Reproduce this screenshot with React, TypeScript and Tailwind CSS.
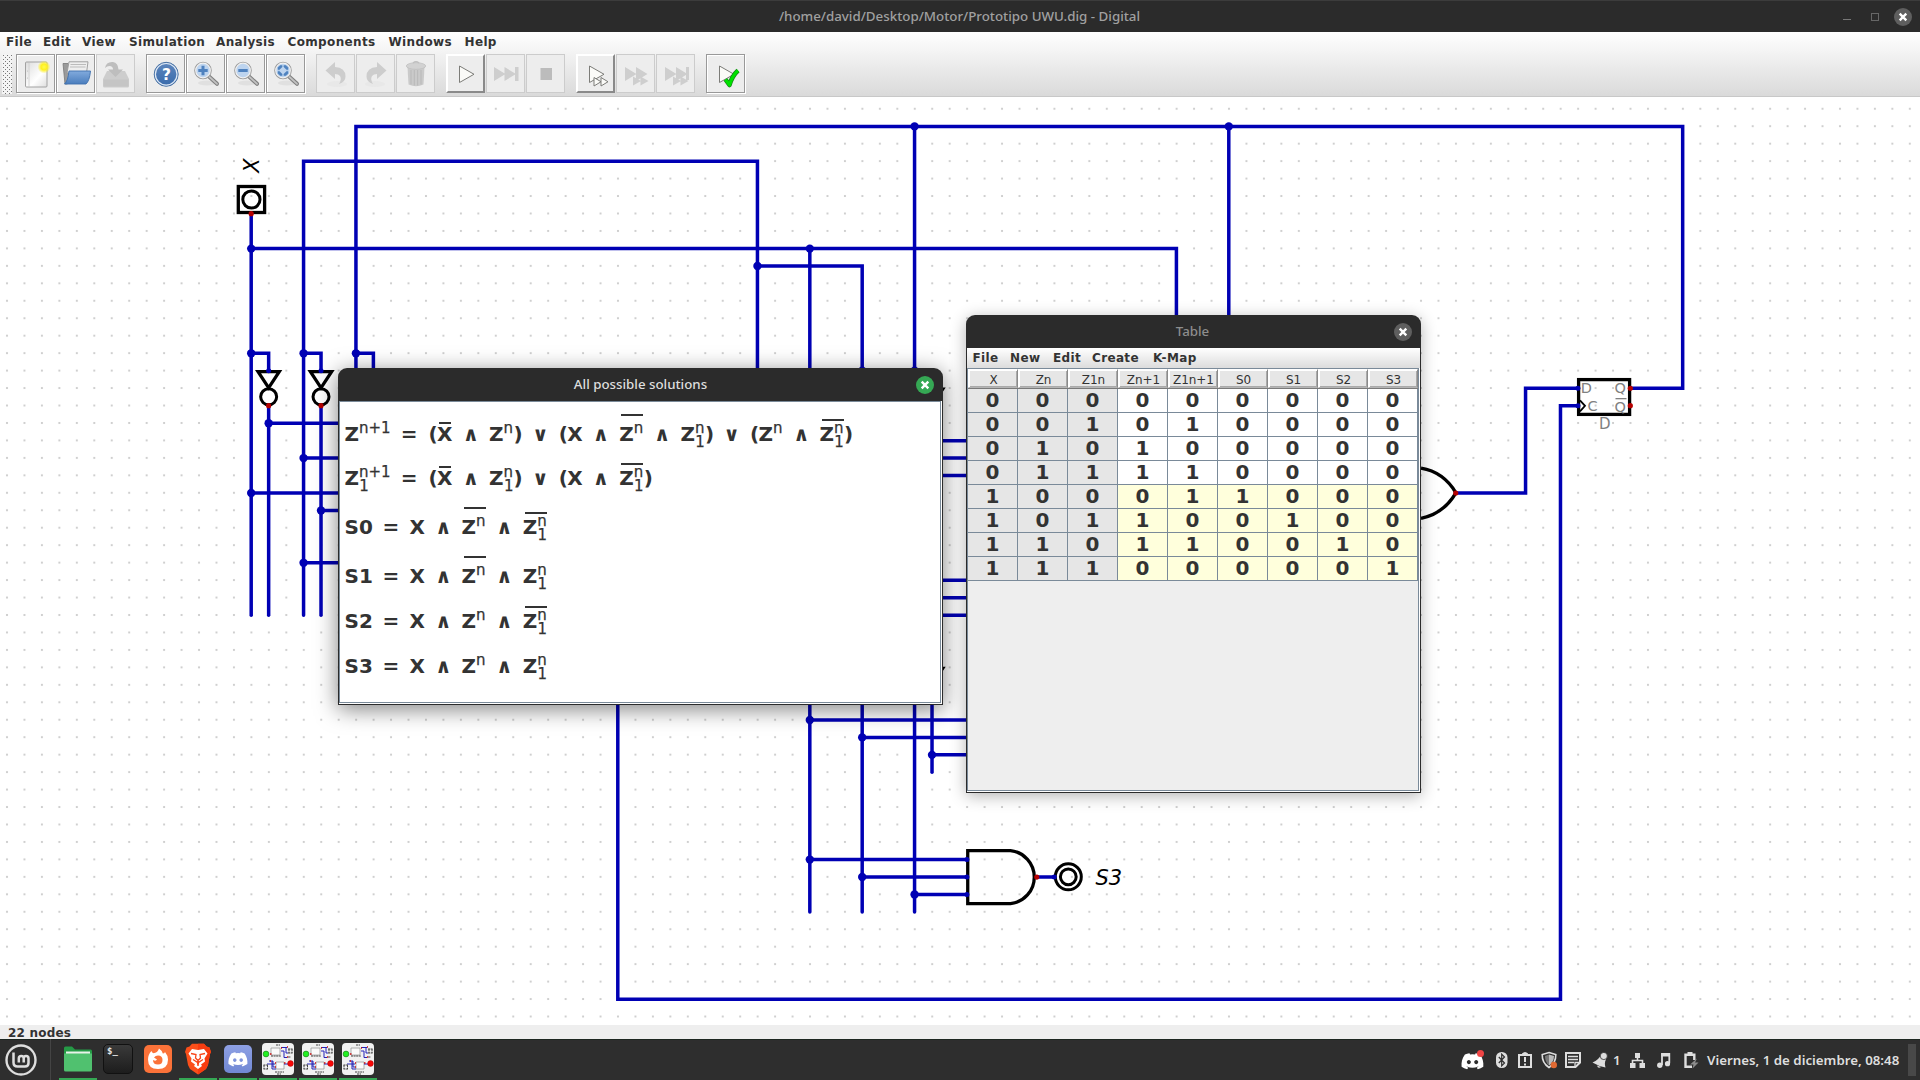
import React from "react";

const G = 17.457;
const gx = (k: number) => 6.8 + G * k;
const gy = (j: number) => 126.4 + G * j;

/* Wires as polylines on the circuit grid */
const WIRES: [number, number][][] = [
  [[14, 5], [14, 28]],
  [[14, 7], [67, 7], [67, 18]],
  [[14, 13], [15, 13], [15, 14]],
  [[15, 16], [15, 28]],
  [[15, 17], [30, 17]],
  [[17, 19], [30, 19]],
  [[14, 21], [30, 21]],
  [[18, 22], [30, 22]],
  [[17, 25], [30, 25]],
  [[17, 28], [17, 2], [43, 2], [43, 20]],
  [[17, 13], [18, 13], [18, 14]],
  [[18, 16], [18, 28]],
  [[20, 28], [20, 0], [96, 0], [96, 15], [93, 15]],
  [[20, 13], [21, 13], [21, 20]],
  [[43, 8], [49, 8], [49, 45]],
  [[46, 7], [46, 45]],
  [[52, 0], [52, 45]],
  [[70, 0], [70, 18]],
  [[49, 14], [50, 14]],
  [[52, 14], [53, 14]],
  [[53, 33], [53, 37]],
  [[50, 18], [55, 18]],
  [[50, 19], [55, 19]],
  [[50, 20], [55, 20]],
  [[50, 26], [55, 26]],
  [[50, 27], [55, 27]],
  [[50, 28], [55, 28]],
  [[46, 34], [55, 34]],
  [[49, 35], [55, 35]],
  [[53, 36], [55, 36]],
  [[46, 42], [55, 42]],
  [[49, 43], [55, 43]],
  [[52, 44], [55, 44]],
  [[59, 43], [60, 43]],
  [[35, 30], [35, 50], [89, 50], [89, 16], [90, 16]],
  [[83, 21], [87, 21], [87, 15], [90, 15]],
];

const NODES: [number, number][] = [
  [14, 7], [14, 13], [17, 13], [20, 13], [15, 17], [17, 19], [14, 21], [18, 22], [17, 25],
  [43, 8], [46, 7], [52, 0], [70, 0], [49, 14], [52, 14],
  [46, 34], [49, 35], [53, 36], [46, 42], [49, 43], [52, 44],
];

const INPUT_PINS: [number, number][] = [
  [15, 14], [18, 14], [55, 42], [55, 43], [55, 44], [60, 43], [90, 15], [90, 16],
];
const OUTPUT_PINS: [number, number][] = [
  [14, 5], [15, 16], [18, 16], [59, 43], [83, 21], [93, 15], [93, 16], [53, 33],
];

function Inverter({ k, j }: { k: number; j: number }) {
  const x = gx(k);
  const y = gy(j);
  return (
    <g fill="none" stroke="#000" strokeWidth="3.3">
      <path d={`M${x - 10.6} ${y + 0.9}H${x + 10.6}L${x} ${y + 17}Z`} />
      <circle cx={x} cy={y + 26} r="8" strokeWidth="3" />
    </g>
  );
}

function AndGate({ j }: { j: number }) {
  const x = gx(55) + 0.8;
  const y = gy(j);
  return (
    <path
      d={`M${x} ${y - 8.9}H1010.5A26.6 26.6 0 0 1 1010.5 ${y + 44}H${x}Z`}
      fill="none"
      stroke="#000"
      strokeWidth="3.3"
    />
  );
}

function Circuit() {
  return (
    <svg viewBox="0 97 1920 928" className="block h-[928px] w-full" fontFamily="DejaVu Sans, sans-serif">
      <defs>
        <pattern id="grid" x={7 - G / 2} y={126.2 - G / 2} width={G} height={G} patternUnits="userSpaceOnUse">
          <rect x={G / 2 - 1} y={G / 2 - 1} width="2" height="2" fill="#cfcfcf" />
        </pattern>
      </defs>
      <rect x="0" y="97" width="1920" height="928" fill="url(#grid)" />
      <g fill="none" stroke="#000" strokeWidth="3.3">
        <rect x="238.3" y="186.5" width="26.3" height="26" />
        <circle cx="251.4" cy="199.5" r="8.6" strokeWidth="3" />
        <rect x="1578.6" y="379.6" width="51" height="34.8" />
        <path d="M1421 468.2Q1443.5 472 1455.9 492.8Q1443.5 513.8 1421 518.4" />
        <circle cx="1068.3" cy="876.8" r="13" strokeWidth="3" />
        <circle cx="1068.3" cy="876.8" r="7.9" strokeWidth="3" />
      </g>
      <Inverter k={15} j={14} />
      <Inverter k={18} j={14} />
      <Inverter k={53} j={15} />
      <Inverter k={53} j={31} />
      <AndGate j={18} />
      <AndGate j={26} />
      <AndGate j={34} />
      <AndGate j={42} />
      <path d="M1580 400.4L1585 405.8L1580 411.4" fill="none" stroke="#000" strokeWidth="1.8" />
      <g fill="#808080" fontSize="14.5">
        <text x="1580.8" y="392.7">D</text>
        <text x="1587.4" y="411">C</text>
        <text x="1614.4" y="392.7">Q</text>
        <text x="1614.4" y="411.7">Q</text>
        <text x="1599" y="428.6" fontSize="15">D</text>
        <rect x="1615.5" y="398" width="11" height="1.3" />
      </g>
      <g fill="none" stroke="#0000b4" strokeWidth="3.5" strokeLinecap="round" strokeLinejoin="miter">
        {WIRES.map((w, i) => (
          <polyline key={i} points={w.map(([k, j]) => `${gx(k)},${gy(j)}`).join(" ")} />
        ))}
      </g>
      <g fill="#0000b4">
        {NODES.map(([k, j], i) => (
          <circle key={i} cx={gx(k)} cy={gy(j)} r="4.2" />
        ))}
        {INPUT_PINS.map(([k, j], i) => (
          <circle key={i} cx={gx(k)} cy={gy(j)} r="2.5" />
        ))}
      </g>
      <g fill="#b40000">
        {OUTPUT_PINS.map(([k, j], i) => (
          <circle key={i} cx={gx(k)} cy={gy(j)} r="2.6" />
        ))}
      </g>
      <text transform="translate(259.1 172.7) rotate(-90)" fontSize="21" fontStyle="italic" fill="#000">X</text>
      <text x="1095.5" y="885" fontSize="21" fontStyle="italic" fill="#000">S3</text>
    </svg>
  );
}

/* ---------- toolbar ---------- */

function PageIcon() {
  return (
    <svg viewBox="0 0 32 32" className="h-8 w-8">
      <defs>
        <linearGradient id="pg" x1="0" y1="0" x2="1" y2="1">
          <stop offset="0" stopColor="#dcdcdc" /><stop offset=".6" stopColor="#fff" /><stop offset="1" stopColor="#ddd" />
        </linearGradient>
        <radialGradient id="sun"><stop offset="0" stopColor="#fffa50" /><stop offset=".45" stopColor="#fff01e" /><stop offset="1" stopColor="#fff01e" stopOpacity="0" /></radialGradient>
      </defs>
      <rect x="5.5" y="4" width="21.5" height="25" rx="1" fill="url(#pg)" stroke="#9a9a9a" strokeWidth=".9" />
      <path d="M9 5V28.500" stroke="#ccc" strokeWidth=".8" />
      <circle cx="7.500" cy="13" r=".6" fill="#bbb" /><circle cx="7.500" cy="20" r=".6" fill="#bbb" />
      <circle cx="24" cy="9" r="6.5" fill="url(#sun)" />
    </svg>
  );
}

function OpenIcon() {
  return (
    <svg viewBox="0 0 32 32" className="h-8 w-8">
      <defs>
        <linearGradient id="of" x1="0" y1="0" x2="0" y2="1"><stop offset="0" stopColor="#82abdd" /><stop offset="1" stopColor="#4a7dbd" /></linearGradient>
      </defs>
      <path d="M3 5.500H8L10 7.500V24L7 26H5Z" fill="#9a9a9a" stroke="#777" strokeWidth=".8" />
      <path d="M9 3.800H28L26.500 15H7Z" fill="#eee" stroke="#999" strokeWidth=".9" />
      <path d="M10.500 6.500H26M10 9H25.500" stroke="#bbb" />
      <path d="M9 13H30.500Q29.500 23 26 26H4.500Q8 23 9 13Z" fill="url(#of)" stroke="#3f70ae" strokeWidth=".9" />
    </svg>
  );
}

function SaveIcon() {
  return (
    <svg viewBox="0 0 32 32" className="h-8 w-8">
      <path d="M7 13H25L29 21V28Q29 29.500 27.500 29.500H4.500Q3 29.500 3 28V21Z" fill="#cdcdcd" />
      <path d="M3.500 21.500H28.500V28.500H3.500Z" fill="#c5c5c5" />
      <path d="M5 10Q6 3.500 13 4Q18 4.500 18.500 11.500H23L15.500 19L8 11.500H13Q13 8 9.500 8Q7 8 5 10Z" fill="#bebebe" />
    </svg>
  );
}

function HelpIcon() {
  return (
    <svg viewBox="0 0 32 32" className="h-8 w-8">
      <defs><linearGradient id="hb" x1="0" y1="0" x2="0" y2="1"><stop offset="0" stopColor="#5d86bd" /><stop offset="1" stopColor="#386aab" /></linearGradient></defs>
      <circle cx="16.2" cy="16.3" r="12" fill="url(#hb)" stroke="#386499" strokeWidth=".8" />
      <circle cx="16.2" cy="16.3" r="10.8" fill="none" stroke="#dfe9f5" strokeWidth="1.2" />
      <text x="16.4" y="22" textAnchor="middle" fontFamily="DejaVu Sans" fontWeight="700" fontSize="15.5" fill="#fff">?</text>
    </svg>
  );
}

function ZoomIcon({ kind }: { kind: "in" | "out" | "fit" }) {
  return (
    <svg viewBox="0 0 32 32" className="h-8 w-8">
      <ellipse cx="17" cy="25" rx="9" ry="2.5" fill="#e0e0e0" />
      <path d="M19 18.500L27 25.800" stroke="#808080" strokeWidth="4" strokeLinecap="round" />
      <path d="M19 18.500L27 25.800" stroke="#c2c2c2" strokeWidth="1.8" strokeLinecap="round" />
      <circle cx="13" cy="12.5" r="8" fill="#bdd4ef" stroke="#9a9a9a" strokeWidth="1.6" />
      <circle cx="13" cy="12.5" r="7.3" fill="none" stroke="#f2f2f2" strokeWidth="1.2" />
      {kind === "in" && <path d="M13 7.800V17.200M8.300 12.500H17.700" stroke="#4f82bf" strokeWidth="3" />}
      {kind === "out" && <path d="M8.300 12.500H17.700" stroke="#4f82bf" strokeWidth="3" />}
      {kind === "fit" && (
        <path
          d="M8 11.600V9.500L10 7.500H12.100V9L9.500 11.600ZM13.900 7.500H16L18 9.500V11.600H16.500L13.900 9ZM8 13.400H9.500L12.100 16V17.500H10L8 15.500ZM18 13.400V15.500L16 17.500H13.900V16L16.500 13.400Z"
          fill="#4f82bf"
          stroke="#4f82bf"
          strokeWidth=".5"
        />
      )}
    </svg>
  );
}

function UndoIcon({ flip }: { flip?: boolean }) {
  return (
    <svg viewBox="0 0 32 32" className={flip ? "h-8 w-8 -scale-x-100" : "h-8 w-8"}>
      <ellipse cx="17" cy="26" rx="10" ry="3" fill="#e8e8e8" />
      <path d="M5.500 12.500L15 4V9Q25.500 9.500 25.500 18.500Q25.500 24 19 26Q22 21 20 18Q18.500 16 15 16V21Z" fill="#cdcdcd" />
    </svg>
  );
}

function TrashIcon() {
  return (
    <svg viewBox="0 0 32 32" className="h-8 w-8">
      <path d="M7.500 9H24.500L23.500 26.500Q16 30 8.500 26.500Z" fill="#cacaca" />
      <path d="M11 12V26.500M14.300 12V27.500M17.700 12V27.500M21 12V26.500" stroke="#b8b8b8" />
      <ellipse cx="16" cy="8" rx="9.700" ry="3.300" fill="#d2d2d2" stroke="#c0c0c0" strokeWidth=".8" />
      <path d="M13 5Q16 2.500 19 5" fill="none" stroke="#c0c0c0" strokeWidth="1.5" />
    </svg>
  );
}

const tri = (x: number, y: number, w: number, h: number) => `M${x} ${y}L${x + w} ${y + h / 2}L${x} ${y + h}Z`;

function PlayIcon({ kind }: { kind: "play" | "step" | "stop" | "micro" | "ff" | "ffend" | "check" }) {
  const outline = { fill: "#fbfbf8", stroke: "#7c7c78", strokeWidth: 1 };
  return (
    <svg viewBox="0 0 32 32" className="h-8 w-8">
      {(kind === "play" || kind === "micro" || kind === "check") && <path d={tri(9.5, 8, 14.5, 16.5)} {...outline} />}
      {kind === "micro" && <path d={tri(14, 19.500, 7, 8.500) + tri(21, 19.500, 7, 8.500)} {...outline} />}
      {kind === "check" && (
        <path d="M15.500 21.500L19.500 27Q22 18 28 12.500" fill="none" stroke="#1c7a1c" strokeWidth="4.6" strokeLinejoin="round" />
      )}
      {kind === "check" && (
        <path d="M15.500 21.500L19.500 27Q22 18 28 12.500" fill="none" stroke="#00e100" strokeWidth="3.2" strokeLinejoin="round" />
      )}
      {kind === "step" && (
        <g fill="#cecece"><path d={tri(4, 9, 11.5, 14) + tri(14.5, 9, 11.5, 14)} /><rect x="25" y="9" width="3.5" height="14" /></g>
      )}
      {kind === "stop" && <rect x="10.500" y="10" width="11.500" height="12" fill="#bcbcbc" />}
      {(kind === "ff" || kind === "ffend") && (
        <g fill="#cecece">
          <path d={tri(5, 9, 11.5, 14) + tri(16, 9, 11.5, 14) + tri(13, 18.5, 8, 9) + tri(20.5, 18.5, 8, 9)} />
          {kind === "ffend" && <rect x="26" y="9" width="3" height="13" />}
        </g>
      )}
    </svg>
  );
}

type Tone = "on" | "off" | "raised";

function Tool({ tone, children }: { tone: Tone; children: React.ReactNode }) {
  const look =
    tone === "on"
      ? "border border-[#999] shadow-[1px_1px_0_#fff,inset_1px_1px_0_#fff]"
      : tone === "off"
        ? "border border-[#cccccc]"
        : "border-2 border-t-white border-l-white border-r-[#8a8a8a] border-b-[#8a8a8a]";
  return <div className={`flex h-[39px] w-[39px] items-center justify-center bg-[#ededed] ${look}`}>{children}</div>;
}

function Toolbar() {
  return (
    <div className="flex h-[41px] items-start gap-[10px] pl-[2px]">
      <svg className="mr-[-6px] h-10 w-[10px] shrink-0">
        <defs>
          <pattern id="grip" width="4" height="4" patternUnits="userSpaceOnUse">
            <rect width="4" height="4" fill="#f4f4f4" /><rect x="1" y="1" width="1" height="1" fill="#777" /><rect x="3" y="3" width="1" height="1" fill="#777" />
          </pattern>
        </defs>
        <rect width="10" height="40" fill="url(#grip)" />
      </svg>
      <div className="flex gap-px">
        <Tool tone="on"><PageIcon /></Tool>
        <Tool tone="on"><OpenIcon /></Tool>
        <Tool tone="off"><SaveIcon /></Tool>
      </div>
      <div className="ml-px flex gap-px">
        <Tool tone="on"><HelpIcon /></Tool>
        <Tool tone="on"><ZoomIcon kind="in" /></Tool>
        <Tool tone="on"><ZoomIcon kind="out" /></Tool>
        <Tool tone="on"><ZoomIcon kind="fit" /></Tool>
      </div>
      <div className="ml-px flex gap-px">
        <Tool tone="off"><UndoIcon /></Tool>
        <Tool tone="off"><UndoIcon flip /></Tool>
        <Tool tone="off"><TrashIcon /></Tool>
      </div>
      <div className="ml-px flex gap-px">
        <Tool tone="raised"><PlayIcon kind="play" /></Tool>
        <Tool tone="off"><PlayIcon kind="step" /></Tool>
        <Tool tone="off"><PlayIcon kind="stop" /></Tool>
      </div>
      <div className="ml-px flex gap-px">
        <Tool tone="raised"><PlayIcon kind="micro" /></Tool>
        <Tool tone="off"><PlayIcon kind="ff" /></Tool>
        <Tool tone="off"><PlayIcon kind="ffend" /></Tool>
      </div>
      <div className="ml-px flex">
        <Tool tone="on"><PlayIcon kind="check" /></Tool>
      </div>
    </div>
  );
}

/* ---------- windows ---------- */

function CloseButton({ green }: { green?: boolean }) {
  return (
    <span className={`flex h-[18px] w-[18px] items-center justify-center rounded-full ${green ? "bg-[#35a854]" : "bg-[#5f5f5f]"}`}>
      <svg viewBox="0 0 10 10" className="h-[10px] w-[10px]">
        <path d="M1.700 1.700L8.300 8.300M8.300 1.700L1.700 8.300" stroke="#fff" strokeWidth="2.4" />
      </svg>
    </span>
  );
}

function Formula({ children, className }: { children: React.ReactNode; className: string }) {
  return <div className={`flex h-6 items-center whitespace-nowrap ${className}`}>{children}</div>;
}
const Op = ({ children }: { children: string }) => <span className="w-[36.6px] text-center">{children}</span>;
const Eq = ({ w }: { w: string }) => <span className={`text-center ${w}`}>=</span>;
const P = ({ children }: { children: string }) => <span className="w-[8.5px]">{children}</span>;
const X = ({ bar }: { bar?: boolean }) => (
  <span className="relative w-[15.5px]">
    X{bar && <i className="absolute top-0 left-[2px] h-[2px] w-[12px] bg-[#333]" />}
  </span>
);
function Z({ sup = "n", sub, bar }: { sup?: string; sub?: boolean; bar?: boolean }) {
  return (
    <span className="relative flex h-6 items-center">
      <span className="w-[14.5px]">Z</span>
      <span className={`relative h-6 text-[15px] font-normal [-webkit-text-stroke:0.25px_#333] ${sup === "n" ? "w-[10px]" : "w-[31px]"}`}>
        <span className="absolute -top-[6px] left-0 leading-6">{sup}</span>
        {sub && <span className="absolute top-[8px] left-[0.3px] leading-6">1</span>}
      </span>
      {bar && <i className={`absolute left-[2px] h-[2px] w-[22px] bg-[#333] ${sub ? "-top-[3px]" : "-top-[8px]"}`} />}
    </span>
  );
}

function SolutionsWindow() {
  return (
    <section className="absolute top-[368px] left-[338px] flex h-[337px] w-[605px] flex-col rounded-t-[9px] bg-[#2b2b2b] px-px pb-px shadow-[0_4px_22px_rgba(0,0,0,0.5)]">
      <header className="grid h-[33px] shrink-0 grid-cols-[1fr_auto_1fr] items-center pr-[8px] pl-[8px] font-['Noto_Sans',sans-serif] text-[13.3px] font-medium text-[#dedede]">
        <span />
        <span className="pt-px">All possible solutions</span>
        <span className="flex justify-end"><CloseButton green /></span>
      </header>
      <div className="flex min-h-0 flex-1 flex-col bg-white pr-px pb-px">
        <div className="flex-1 border border-[#7a8a99] bg-white pl-[4.500px] font-['DejaVu_Sans',sans-serif] text-[20px] leading-6 font-bold text-[#333]">
          <Formula className="mt-[20px]">
            <Z sup="n+1" /><Eq w="w-[38.5px]" /><P>(</P><X bar /><Op>∧</Op><Z /><P>)</P><Op>∨</Op><P>(</P><X /><Op>∧</Op><Z bar /><Op>∧</Op><Z sub /><P>)</P><Op>∨</Op><P>(</P><Z /><Op>∧</Op><Z sub bar /><P>)</P>
          </Formula>
          <Formula className="mt-[20px]">
            <Z sup="n+1" sub /><Eq w="w-[38.5px]" /><P>(</P><X bar /><Op>∧</Op><Z sub /><P>)</P><Op>∨</Op><P>(</P><X /><Op>∧</Op><Z sub bar /><P>)</P>
          </Formula>
          <Formula className="mt-[25px]"><span className="w-[28px]">S0</span><Eq w="w-[37px]" /><X /><Op>∧</Op><Z bar /><Op>∧</Op><Z sub bar /></Formula>
          <Formula className="mt-[25px]"><span className="w-[28px]">S1</span><Eq w="w-[37px]" /><X /><Op>∧</Op><Z bar /><Op>∧</Op><Z sub /></Formula>
          <Formula className="mt-[21px]"><span className="w-[28px]">S2</span><Eq w="w-[37px]" /><X /><Op>∧</Op><Z /><Op>∧</Op><Z sub bar /></Formula>
          <Formula className="mt-[21px]"><span className="w-[28px]">S3</span><Eq w="w-[37px]" /><X /><Op>∧</Op><Z /><Op>∧</Op><Z sub /></Formula>
        </div>
      </div>
    </section>
  );
}

const HEAD = ["X", "Zn", "Z1n", "Zn+1", "Z1n+1", "S0", "S1", "S2", "S3"];
const ROWS = ["000000000", "001010000", "010100000", "011110000", "100011000", "101100100", "110110010", "111000001"];

function TableWindow() {
  return (
    <section className="absolute top-[315px] left-[966px] flex h-[478px] w-[455px] flex-col rounded-t-[9px] bg-[#2b2b2b] px-px pb-px shadow-[0_3px_16px_rgba(0,0,0,0.3)]">
      <header className="grid h-[33px] shrink-0 grid-cols-[1fr_auto_1fr] items-center pr-[8px] pl-[6px] font-['Noto_Sans',sans-serif] text-[13.3px] font-medium text-[#8d8d8d]">
        <span />
        <span className="pt-px">Table</span>
        <span className="flex justify-end"><CloseButton /></span>
      </header>
      <nav className="flex h-5 shrink-0 items-center bg-linear-to-b from-white to-[#dcdcdc] pl-[5.500px] text-[12px] font-bold tracking-[0.35px] text-[#333]">
        <span className="w-[37.5px]">File</span>
        <span className="w-[43px]">New</span>
        <span className="w-[39px]">Edit</span>
        <span className="w-[61px]">Create</span>
        <span>K-Map</span>
      </nav>
      <div className="flex min-h-0 flex-1 flex-col bg-white pr-px pb-px">
        <div className="flex-1 border border-[#7a8a99] bg-[#eee]">
          <div className="flex h-[20px] border-b border-[#7a7a7a] text-[12px] tracking-[-0.05px] text-[#333]">
            {HEAD.map((h) => (
              <div key={h} className="flex w-[50px] items-center justify-center border border-t-white border-r-[#8a8a8a] border-b-[#b4b4b4] border-l-white bg-[#e6e6e6] pt-[2px] pl-px whitespace-nowrap shadow-[inset_1px_1px_0_#fff,inset_-1px_-1px_0_#aaa]">
                {h}
              </div>
            ))}
          </div>
          {ROWS.map((row, r) => (
            <div key={r} className="flex h-6 text-[20px] leading-[22px] font-bold text-[#333]">
              {row.split("").map((d, c) => (
                <div
                  key={c}
                  className={`w-[50px] border-r border-b border-[#7a8a99] text-center ${c < 3 ? "bg-[#e6e6e6]" : r < 4 ? "bg-white" : "bg-[#ffffdc]"}`}
                >
                  {d}
                </div>
              ))}
            </div>
          ))}
        </div>
      </div>
    </section>
  );
}

/* ---------- taskbar ---------- */

function MintLogo() {
  return (
    <svg viewBox="0 0 32 32" className="h-8 w-8">
      <circle cx="16" cy="16" r="14.5" fill="none" stroke="#dedede" strokeWidth="2.4" />
      <path d="M8.500 8.500V18.500Q8.500 22.500 12.500 22.500H20Q23.500 22.500 23.500 19V14.500Q23.500 12 21 12Q18.700 12 18.700 14.500V18.500M18.700 14.500Q18.700 12 16.300 12Q13.800 12 13.800 14.500V18.500" fill="none" stroke="#dedede" strokeWidth="2.5" />
    </svg>
  );
}

function FolderIcon() {
  return (
    <svg viewBox="0 0 32 32" className="h-8 w-8">
      <path d="M2 5Q2 3.500 3.500 3.500H10L13 6.500H28.500Q30 6.500 30 8V16H2Z" fill="#259a46" />
      <rect x="4" y="8.5" width="24" height="6" fill="#e8f3ea" />
      <path d="M2 10.500H30V27Q30 28.500 28.500 28.500H3.500Q2 28.500 2 27Z" fill="#50c16f" />
    </svg>
  );
}

function TerminalIcon() {
  return (
    <div className="h-[30px] w-[30px] rounded-[5px] border border-[#111] bg-linear-to-b from-[#3a3a3a] to-[#1d1d1d] pl-[3px] font-['DejaVu_Sans_Mono',monospace] text-[9px] leading-[13px] font-bold text-[#e8e8e8]">
      $_
    </div>
  );
}

function FirefoxIcon() {
  return (
    <svg viewBox="0 0 32 32" className="h-8 w-8">
      <rect x="2" y="2" width="28" height="28" rx="5" fill="#fb7239" />
      <path d="M17 5.500Q20 7.500 20.800 10.500Q22.500 10.500 23 9Q26 12.500 26 16.500Q26 26 16 26Q6 26 6 16.500Q6 11.500 9.500 8Q10 10 11.500 10.200Q15.500 10 17 5.500Z" fill="#fff" />
      <path d="M16 12.500Q20.500 12.500 20.500 17Q20.500 21.500 16 21.500Q11 21.500 11 17Q14 18.500 15 16.500L12 14.500Q13.500 12.500 16 12.500Z" fill="#fb7239" />
    </svg>
  );
}

function BraveIcon() {
  return (
    <svg viewBox="0 0 32 32" className="h-8 w-8">
      <path d="M10 .8H22L24.500 3.500L27.500 4.500L29 9L28 11L26 22L24 26L16 31.500L8 26L6 22L4 11L3 9L4.500 4.500L7.500 3.500Z" fill="#fb4f1a" />
      <path d="M16 .8H22L24.500 3.500L27.500 4.500L29 9L28 11L26 22L24 26L16 31.500Z" fill="#f73c10" />
      <path d="M10 6L16 7L22 6L25.500 10.500L22.500 15.500L23 18.500L19 21.500L20 23L16 26L12 23L13 21.500L9 18.500L9.500 15.500L6.500 10.500Z" fill="#fff" />
      <path d="M9 10.500L14 11.500L13.500 15L16 17.500L18.500 15L18 11.500L23 10.500M11 16.500L15.500 19.500L16 23L16.500 19.500L21 16.500M16 17.500V20" fill="none" stroke="#f9461a" strokeWidth="1.3" />
    </svg>
  );
}

const DISCORD =
  "M20.3 4.400A19.800 19.800 0 0 0 15.400 2.900c-.2.400-.5.900-.6 1.300a18.300 18.300 0 0 0-5.500 0C9.100 3.800 8.900 3.300 8.600 2.900a19.700 19.700 0 0 0-4.900 1.500C.5 9 -.3 13.600.1 18.100a19.900 19.900 0 0 0 6 3c.5-.6.900-1.300 1.300-2-.7-.3-1.300-.6-1.900-.9l.4-.3a14.200 14.200 0 0 0 12.100 0l.4.3c-.6.400-1.200.7-1.900.9.400.7.800 1.400 1.200 2a19.800 19.800 0 0 0 6-3c.5-5.200-.8-9.700-3.400-13.700ZM8 15.300c-1.200 0-2.200-1.100-2.200-2.400S6.800 10.500 8 10.500s2.200 1.100 2.200 2.400S9.200 15.300 8 15.300Zm8 0c-1.200 0-2.200-1.100-2.200-2.400s1-2.400 2.200-2.400 2.200 1.100 2.200 2.400-1 2.400-2.200 2.400Z";

function DiscordIcon() {
  return (
    <svg viewBox="0 0 32 32" className="h-8 w-8">
      <defs><linearGradient id="dc" x1="0" y1="0" x2="0" y2="1"><stop offset="0" stopColor="#8ea0e4" /><stop offset="1" stopColor="#7188d4" /></linearGradient></defs>
      <rect x="2" y="2" width="28" height="28" rx="5" fill="url(#dc)" />
      <path transform="translate(6.400 7) scale(.8 .78)" d={DISCORD} fill="#fff" />
    </svg>
  );
}

function CircuitIcon() {
  return (
    <svg viewBox="0 0 32 32" className="h-8 w-8">
      <rect width="32" height="32" rx="4" fill="#f1f1f1" />
      <path d="M9 5H18V12H9ZM14 19H22V26H14Z" fill="#fafafa" stroke="#999" strokeWidth=".8" />
      <path d="M19 4.500H25M19 8H22V14.500H25M24 5V10H26M7 18H11V24H13M5 21H13M10 18V26H14M22 21H27" fill="none" stroke="#2323b8" strokeWidth="1" />
      <path d="M26 6H31M26 10H31M27 6V10M30 6V10M1.500 22H6M1.500 26H6M2 22V26M5.500 22V26M9 13H19M13 29H22M14 2H18M15 31H19M26 14H29" stroke="#444" strokeWidth="1" strokeDasharray="2 .6" fill="none" />
      <path d="M8 11h1.500M19 5h1M8 18h1M13 24h1M13 20h1M22 20h1.500M25 4h1M25 14h1" stroke="#d01010" strokeWidth="1.5" />
      <circle cx="4" cy="11" r="2.9" fill="#22f022" stroke="#187018" strokeWidth=".6" />
      <circle cx="28.500" cy="20.500" r="2.9" fill="#f80808" stroke="#900" strokeWidth=".4" />
    </svg>
  );
}

function Task({ active, children }: { active?: boolean; children: React.ReactNode }) {
  return (
    <div className={`mr-[2px] flex h-[41px] w-[38px] justify-center pt-[4px] ${active ? "border-b-2 border-[#35a854]" : ""}`}>
      {children}
    </div>
  );
}

function Tray() {
  const c = "#dedede";
  return (
    <svg viewBox="1456 1044 250 32" className="h-8 w-[250px]">
      <path transform="translate(1461.500 1052.500) scale(.92 .88) translate(0 -2)" d={DISCORD} fill="#fff" />
      <circle cx="1480.5" cy="1053.500" r="3.5" fill="#f04545" />
      <rect x="1496" y="1052" width="11.5" height="16" rx="5.5" fill={c} />
      <path d="M1498.800 1057L1504.500 1063L1501.700 1065.800V1054.200L1504.500 1057L1498.800 1063" fill="none" stroke="#2e2e2e" strokeWidth="1.2" />
      <path d="M1519 1055H1531V1067H1519Z" fill="none" stroke={c} strokeWidth="2" />
      <path d="M1522 1055V1053.500Q1525 1050.500 1528 1053.500V1055Z" fill={c} />
      <path d="M1525 1057V1062M1525 1063.500V1065.500" stroke={c} strokeWidth="2" />
      <path d="M1549 1052.500L1555.800 1054.500Q1556 1063 1549 1067.500Q1542 1063 1542.200 1054.500Z" fill="none" stroke={c} strokeWidth="1.6" />
      <path d="M1549 1054.500L1545 1056Q1545 1062 1549 1065.500Z" fill="#777" />
      <path d="M1549 1054.500L1554 1056Q1554 1062 1549 1065.500Z" fill={c} opacity=".8" />
      <circle cx="1553.800" cy="1065" r="3.2" fill="#e06a33" />
      <path d="M1566 1053H1580V1062.500L1575.500 1067H1566Z" fill="none" stroke={c} strokeWidth="2" />
      <path d="M1568 1056.500H1578M1568 1059.500H1578M1568 1062.500H1574M1575 1067V1062.500H1580" stroke={c} strokeWidth="1.3" fill="none" />
      <path d="M1592.500 1062.500Q1599 1060 1601.500 1053.500L1606 1059.500Q1604 1063 1605.500 1067.500Q1598 1066 1592.500 1062.500Z" fill={c} />
      <path d="M1597 1065.500L1601 1067Q1598 1069 1597 1065.500Z" fill={c} />
      <circle cx="1603.800" cy="1056" r="3.6" fill={c} stroke="#2e2e2e" strokeWidth=".8" />
      <path d="M1635 1053H1640V1058H1635ZM1630 1063H1635.500V1068H1630ZM1639.500 1063H1645V1068H1639.500Z" fill={c} />
      <path d="M1637.500 1058V1060.500M1632.500 1064V1060.500H1642.500V1064" fill="none" stroke={c} strokeWidth="1.6" />
      <path d="M1662 1065V1054H1669.300V1063" fill="none" stroke={c} strokeWidth="1.8" />
      <path d="M1661.200 1055H1670" stroke={c} strokeWidth="3" />
      <circle cx="1659.800" cy="1065.200" r="2.7" fill={c} /><circle cx="1667.500" cy="1063.700" r="2.6" fill={c} />
      <path d="M1692 1066.700H1685.500V1054.800H1694.300V1060" fill="none" stroke={c} strokeWidth="2.4" />
      <rect x="1687.500" y="1052" width="5" height="3" fill={c} />
      <path d="M1697 1058.500L1690 1064.500H1693.500L1692.500 1068.500L1698.500 1062.500H1695Z" fill="#8b8b8b" />
    </svg>
  );
}

export default function App() {
  return (
    <div className="relative flex h-[1080px] w-[1920px] flex-col overflow-hidden bg-white font-['DejaVu_Sans',sans-serif]">
      <header className="grid h-8 shrink-0 grid-cols-[1fr_auto_1fr] items-center border-t border-[#3c3c3c] bg-[#2b2b2b] pr-[8px] pl-[7px] font-['Noto_Sans',sans-serif] text-[13.33px] font-medium text-[#a0a0a0]">
        <span />
        <span>/home/david/Desktop/Motor/Prototipo UWU.dig - Digital</span>
        <span className="flex items-center justify-end">
          <i className="mt-[5px] mr-[20px] h-px w-2 bg-[#777]" />
          <i className="mr-[15px] h-2 w-2 border border-[#666]" />
          <CloseButton />
        </span>
      </header>
      <div className="h-[65px] shrink-0 border-b border-[#c8c8c8] bg-linear-to-b from-white to-[#dadada]">
        <nav className="flex h-[22px] items-center pb-[2px] pl-[6px] text-[12px] font-bold tracking-[0.35px] text-[#333]">
          <span className="w-[37px]">File</span>
          <span className="w-[39px]">Edit</span>
          <span className="w-[47px]">View</span>
          <span className="w-[87px]">Simulation</span>
          <span className="w-[71.500px]">Analysis</span>
          <span className="w-[101px]">Components</span>
          <span className="w-[76px]">Windows</span>
          <span>Help</span>
        </nav>
        <Toolbar />
      </div>
      <main className="h-[928px] shrink-0"><Circuit /></main>
      <div className="flex h-[14px] shrink-0 items-center bg-[#eee] pt-[2px] pl-[8px] text-[12px] leading-[14px] font-bold tracking-[0.2px] text-[#333]">22 nodes</div>
      <footer className="flex h-[41px] shrink-0 items-start bg-[#2e2e2e] shadow-[inset_0_1px_0_#1c2620]">
        <div className="flex h-[41px] w-[51px] items-center border-r border-[#444] pl-[5px]"><MintLogo /></div>
        <div className="ml-[8px] flex">
          <Task active><FolderIcon /></Task>
          <Task><div className="pt-px"><TerminalIcon /></div></Task>
          <Task><FirefoxIcon /></Task>
          <Task active><BraveIcon /></Task>
          <Task active><DiscordIcon /></Task>
          <Task active><CircuitIcon /></Task>
          <Task active><CircuitIcon /></Task>
          <Task active><CircuitIcon /></Task>
        </div>
        <div className="ml-auto flex h-[41px] items-center font-['Noto_Sans',sans-serif] text-[13.3px] font-semibold text-[#dedede]">
          <div className="relative h-8"><Tray /><span className="absolute top-[7px] left-[157px]">1</span></div>
          <span className="w-[202px] pt-[2px] pl-px whitespace-nowrap">Viernes, 1 de diciembre, 08:48</span>
          <i className="mr-1 h-8 w-2 bg-[#484848]" />
        </div>
      </footer>
      <TableWindow />
      <SolutionsWindow />
    </div>
  );
}
